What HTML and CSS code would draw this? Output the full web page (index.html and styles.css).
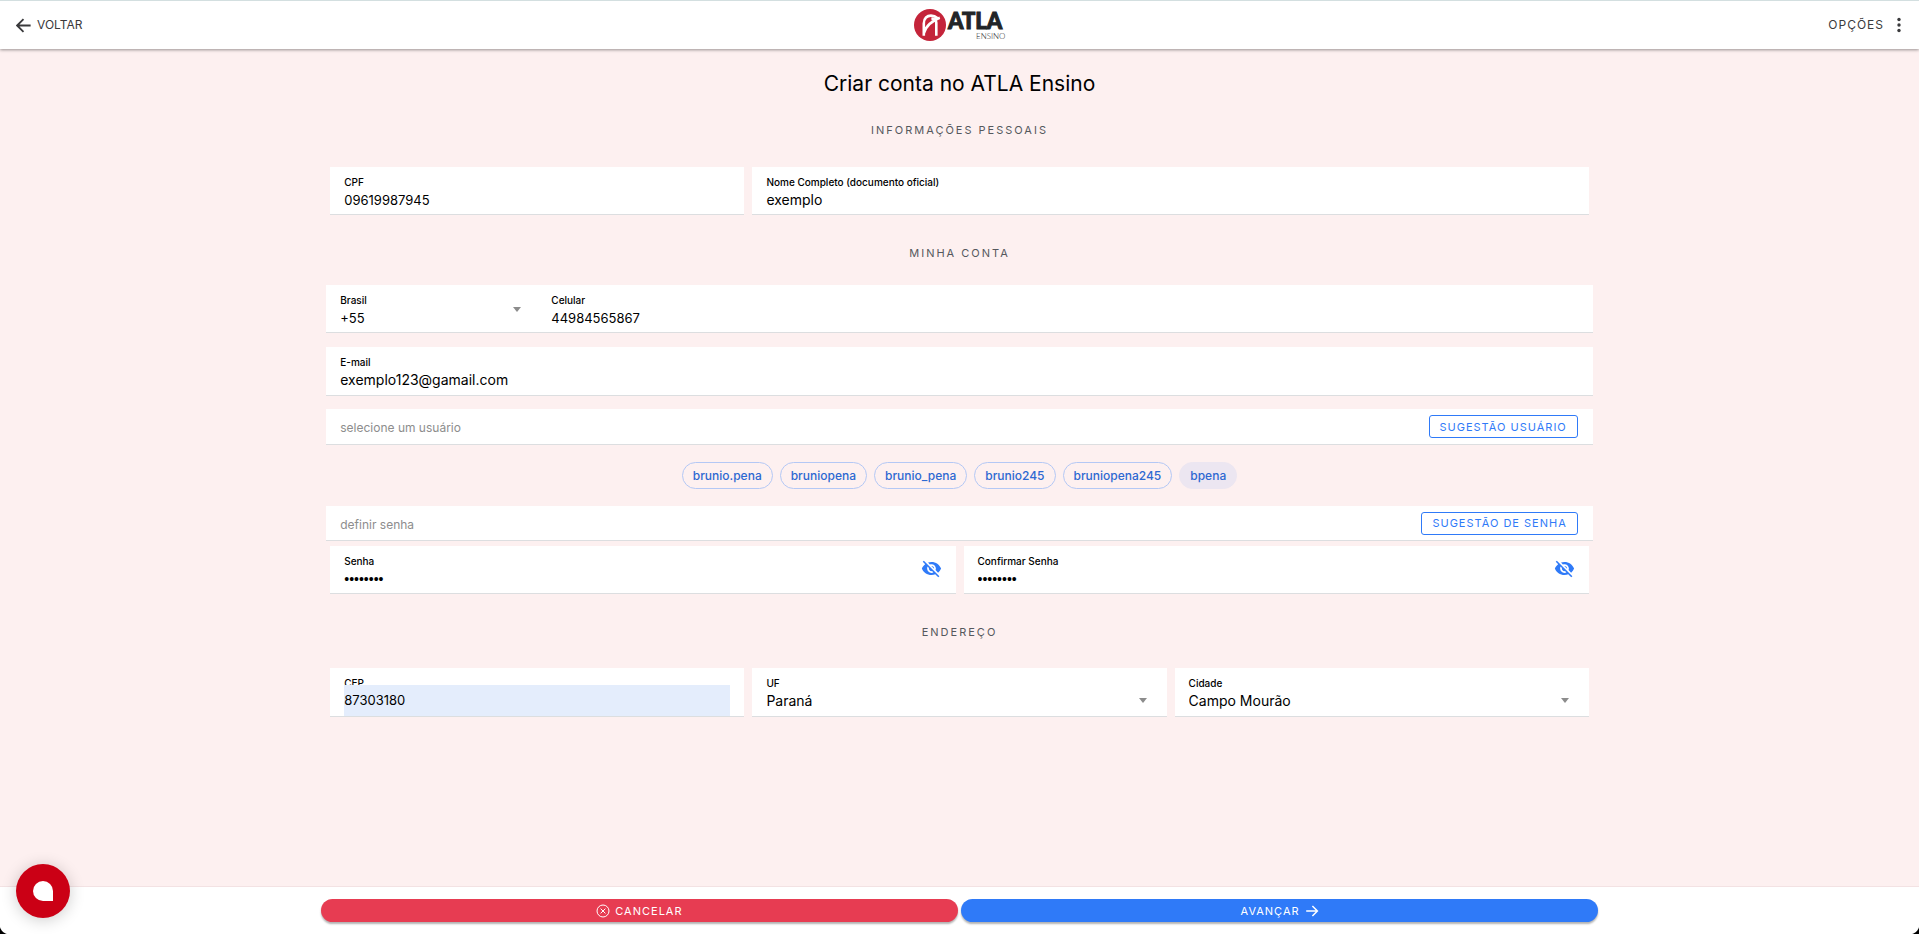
FILE: index.html
```html
<!DOCTYPE html>
<html lang="pt-BR">
<head>
<meta charset="utf-8">
<title>Criar conta no ATLA Ensino</title>
<link rel="stylesheet" href="styles.css">
</head>
<body>
<header class="toolbar">
  <button class="tool-btn" type="button">
    <svg class="icon-back" viewBox="0 0 16 16" aria-hidden="true"><path d="M8 1.2 1.2 8 8 14.8M1.2 8H15.6" fill="none" stroke="currentColor" stroke-width="1.9"/></svg>
    <span class="back-label">VOLTAR</span>
  </button>
  <svg class="logo" viewBox="0 0 92 34" role="img" aria-label="ATLA Ensino">
    <circle cx="17" cy="17" r="16" fill="#c4243a"/>
    <path d="M10.800 27.800V15.500C10.800 10 14.200 7.600 18 7.600c2.500 0 4.700.9 6.200 2.400M23.300 27.800V14.800C23.300 11.500 21 10.700 18.400 10.900M10.800 25.500C12.500 18.500 19 12.500 26.800 9.800" fill="none" stroke="#fff" stroke-width="2.600"/>
    <text x="35" y="21" class="logo-name">ATLA</text>
    <text x="63" y="31" class="logo-sub">ENSINO</text>
  </svg>
  <button class="tool-btn tool-end" type="button">
    <span class="options-label">OPÇÕES</span>
    <svg class="icon-dots" viewBox="0 0 4 16" aria-hidden="true"><circle cx="2" cy="2.500" r="1.700"/><circle cx="2" cy="8" r="1.700"/><circle cx="2" cy="13.500" r="1.700"/></svg>
  </button>
</header>

<main class="page">
  <h1 class="title">Criar conta no ATLA Ensino</h1>
  <form class="form" id="signup">
    <h2 class="section">INFORMAÇÕES PESSOAIS</h2>
    <div class="row row-person">
      <div class="field"><label for="cpf">CPF</label><input id="cpf" class="digits" type="text" value="09619987945"></div>
      <div class="field field-wide"><label for="nome">Nome Completo (documento oficial)</label><input id="nome" type="text" value="exemplo"></div>
    </div>

    <h2 class="section">MINHA CONTA</h2>
    <div class="phone">
      <div class="field field-ddi"><label for="ddi">Brasil</label><select id="ddi" class="digits"><option>+55</option></select><span class="caret"></span></div>
      <div class="field"><label for="cel">Celular</label><input id="cel" class="digits" type="tel" value="44984565867"></div>
    </div>
    <div class="field field-email"><label for="email">E-mail</label><input id="email" type="email" value="exemplo123@gamail.com"></div>
    <div class="bar">
      <input type="text" aria-label="usuário" placeholder="selecione um usuário">
      <button class="outline" type="button">SUGESTÃO USUÁRIO</button>
    </div>
    <div class="chips">
      <button class="chip" type="button">brunio.pena</button>
      <button class="chip" type="button">bruniopena</button>
      <button class="chip" type="button">brunio_pena</button>
      <button class="chip" type="button">brunio245</button>
      <button class="chip" type="button">bruniopena245</button>
      <button class="chip chip-on" type="button">bpena</button>
    </div>
    <div class="bar bar-pass">
      <input type="text" aria-label="senha" placeholder="definir senha">
      <button class="outline" type="button">SUGESTÃO DE SENHA</button>
    </div>
    <div class="row row-pass">
      <div class="field"><label for="senha">Senha</label><input id="senha" type="password" value="exemplo1">
        <button class="eye" type="button" aria-label="Mostrar senha"><svg viewBox="0 0 24 24" aria-hidden="true"><path d="M12 7c2.760 0 5 2.240 5 5 0 .65-.13 1.260-.36 1.830l2.920 2.920c1.510-1.260 2.700-2.890 3.430-4.750-1.730-4.390-6-7.500-11-7.500-1.400 0-2.740.25-3.980.7l2.160 2.160C10.740 7.130 11.350 7 12 7zM2 4.270l2.280 2.280.46.46C3.080 8.300 1.780 10.020 1 12c1.730 4.390 6 7.500 11 7.500 1.550 0 3.030-.3 4.380-.84l.42.42L19.730 22 21 20.730 3.270 3 2 4.270zM7.530 9.800l1.550 1.550c-.05.21-.08.43-.08.65 0 1.660 1.340 3 3 3 .22 0 .44-.03.65-.08l1.550 1.550c-.67.33-1.410.53-2.200.53-2.760 0-5-2.240-5-5 0-.79.2-1.530.53-2.200zm4.310-.78l3.150 3.150.02-.16c0-1.660-1.340-3-3-3l-.17.01z"/></svg></button>
      </div>
      <div class="field"><label for="senha2">Confirmar Senha</label><input id="senha2" type="password" value="exemplo1">
        <button class="eye" type="button" aria-label="Mostrar senha"><svg viewBox="0 0 24 24" aria-hidden="true"><path d="M12 7c2.760 0 5 2.240 5 5 0 .65-.13 1.260-.36 1.830l2.920 2.920c1.510-1.260 2.700-2.890 3.430-4.750-1.730-4.390-6-7.500-11-7.500-1.400 0-2.740.25-3.980.7l2.160 2.160C10.740 7.130 11.350 7 12 7zM2 4.270l2.280 2.280.46.46C3.080 8.300 1.780 10.020 1 12c1.730 4.390 6 7.500 11 7.500 1.550 0 3.030-.3 4.380-.84l.42.42L19.730 22 21 20.730 3.270 3 2 4.270zM7.530 9.800l1.550 1.550c-.05.21-.08.43-.08.65 0 1.660 1.340 3 3 3 .22 0 .44-.03.65-.08l1.550 1.550c-.67.33-1.410.53-2.200.53-2.760 0-5-2.240-5-5 0-.79.2-1.530.53-2.200zm4.310-.78l3.150 3.150.02-.16c0-1.660-1.340-3-3-3l-.17.01z"/></svg></button>
      </div>
    </div>

    <h2 class="section">ENDEREÇO</h2>
    <div class="row row-address">
      <div class="field field-filled"><label for="cep">CEP</label><input id="cep" class="digits" type="text" value="87303180"></div>
      <div class="field"><label for="uf">UF</label><select id="uf"><option>Paraná</option></select><span class="caret"></span></div>
      <div class="field"><label for="cidade">Cidade</label><select id="cidade"><option>Campo Mourão</option></select><span class="caret"></span></div>
    </div>
  </form>
</main>

<footer class="footer">
  <div class="actions">
    <button class="action cancel" type="button">
      <svg viewBox="0 0 14 14" aria-hidden="true"><circle cx="7" cy="7" r="6"/><path d="M4.600 4.600l4.800 4.800M9.400 4.600 4.600 9.400"/></svg>
      CANCELAR
    </button>
    <button class="action next" type="submit" form="signup">
      AVANÇAR
      <svg class="arrow" viewBox="0 0 14 14" aria-hidden="true"><path d="M1.200 7H12.400M7.400 2l5 5-5 5"/></svg>
    </button>
  </div>
</footer>
<button class="chat" type="button" aria-label="Abrir chat"><span class="chat-mark"></span></button>
<span class="corner corner-left"></span>
<span class="corner corner-right"></span>
</body>
</html>
```
FILE: styles.css
```css
* { box-sizing: border-box; }
html, body { height: 100%; }
body {
  margin: 0;
  display: flex;
  flex-direction: column;
  background: #fdf0f0;
  color: #000;
  font-family: Inter, "Noto Sans", sans-serif;
  font-size: 14px;
}
button, input, select { font: inherit; color: inherit; margin: 0; padding: 0; border: 0; background: none; }
input, select { outline: 0; border-radius: 0; appearance: none; min-width: 0; width: 100%; }
svg { display: block; }

.toolbar {
  flex: none;
  height: 49px;
  display: grid;
  grid-template-columns: 1fr auto 1fr;
  align-items: center;
  padding: 0 18px 0 16px;
  border-top: 1px solid #d3dfe0;
  background: #fff;
  box-shadow: 0 1px 3px rgba(0, 0, 0, .4);
  z-index: 1;
}
.tool-btn { display: flex; align-items: center; gap: 6px; justify-self: start; color: #3a3a3c; font-size: 12px; line-height: 16px; }
.tool-end { justify-self: end; gap: 13px; }
.options-label { letter-spacing: 1px; }
.icon-back { width: 15px; height: 15px; }
.icon-dots { width: 4px; height: 16px; fill: #3a3a3c; }
.logo { width: 92px; height: 34px; overflow: visible; }
.logo-name { font: 900 22px Lato, sans-serif; fill: #222427; stroke: #222427; stroke-width: 1; }
.logo-sub { font: 300 8px Lato, sans-serif; fill: #222427; }

.page { flex: 1; display: flex; flex-direction: column; align-items: center; padding-top: 20px; }
.title { margin: 0; font-size: 21px; line-height: 30px; font-weight: 400; }
.form { width: 66%; }
.section {
  margin: 0;
  padding: 21px 0 27px;
  text-align: center;
  font-size: 11px;
  line-height: 20px;
  font-weight: 400;
  letter-spacing: 2px;
  color: #55585d;
}
.row { display: grid; gap: 8px; padding: 0 4px; }
.row-person, .row-address { grid-template-columns: repeat(3, minmax(0, 1fr)); }
.row-pass { grid-template-columns: 1fr 1fr; margin-top: 5px; }
.row + .section { padding-top: 28px; padding-bottom: 22px; }
.row-pass + .section { padding-bottom: 26px; }
.field {
  position: relative;
  height: 48px;
  display: flex;
  flex-direction: column;
  padding: 8px 14px 0;
  background: #fff;
  border-bottom: 1px solid #dcdee0;
}
.field-wide { grid-column: span 2; }
.field label { font-size: 10px; line-height: 15px; font-weight: 500; }
.field input, .field select { height: 20px; line-height: 20px; }
.field .digits { font-size: 13px; }
.field input[type="password"] { font-family: "Liberation Sans", sans-serif; }
.caret {
  position: absolute;
  right: 20px;
  top: 30px;
  border: 4px solid transparent;
  border-top: 5px solid #8c8c8c;
  border-bottom: 0;
}
.phone { display: grid; grid-template-columns: 1fr 5fr; background: #fff; }
.field-ddi .caret { top: 22px; right: 16px; }
.field-email { margin-top: 14px; height: 49px; }
.bar {
  display: flex;
  align-items: center;
  height: 36px;
  padding: 0 15px 0 14px;
  background: #fff;
  border-bottom: 1px solid #dcdee0;
}
.bar-pass { height: 35px; }
.field-email + .bar { margin-top: 13px; }
.bar input { flex: 1; height: 34px; padding-top: 2px; font-size: 12px; }
.bar input::placeholder { color: #8d8d8d; opacity: 1; }
.outline {
  height: 23px;
  padding: 0 10px;
  border: 1px solid #2f7af8;
  border-radius: 3px;
  color: #2f7af8;
  font-size: 11px;
  letter-spacing: 1px;
}
.chips { display: flex; justify-content: center; gap: 7px; padding: 17px 0; }
.chip {
  height: 27px;
  padding: 0 10px;
  border: 1px solid #b4c8f5;
  border-radius: 14px;
  color: #2d68d2;
  font-size: 12px;
  font-weight: 500;
}
.chip-on { border-color: #ece6f1; background: #ece6f1; }
.eye { position: absolute; right: 14px; top: 12px; width: 21px; height: 21px; }
.eye svg { width: 21px; height: 21px; fill: #2f7af8; }
.row-address .field { height: 49px; }
.field-filled input.digits { height: 31px; line-height: 31px; margin-top: -6px; background: #e4edfc; z-index: 1; }

.footer { flex: none; height: 48px; padding-top: 12px; border-top: 1px solid #f3e2e3; background: #fff; }
.actions { width: 66.667%; margin: 0 auto; padding: 0 1px; display: grid; grid-template-columns: 1fr 1fr; gap: 3px; }
.action {
  display: flex;
  align-items: center;
  justify-content: center;
  gap: 5px;
  height: 23px;
  border-radius: 12px;
  color: #fff;
  font-size: 11px;
  letter-spacing: 1px;
  box-shadow: 0 2px 2px rgba(0, 0, 0, .3);
}
.action svg { width: 14px; height: 14px; fill: none; stroke: #fff; stroke-width: 1; }
.action .arrow { stroke-width: 1.500; }
.cancel { background: #e73c52; }
.next { background: #2f7af8; }

.chat {
  position: fixed;
  left: 16px;
  bottom: 16px;
  z-index: 2;
  width: 54px;
  height: 54px;
  display: grid;
  place-items: center;
  border-radius: 50%;
  background: #cb0015;
  box-shadow: 0 2px 16px rgba(0, 0, 0, .2);
}
.chat-mark { width: 20px; height: 20px; background: #fff; border-radius: 10px 10px 0 10px; }
.corner { position: fixed; bottom: 0; width: 10px; height: 10px; }
.corner-left { left: 0; background: radial-gradient(circle at 100% 0, transparent 10px, #000 11px); }
.corner-right { right: 0; background: radial-gradient(circle at 0 0, transparent 10px, #000 11px); }
```
